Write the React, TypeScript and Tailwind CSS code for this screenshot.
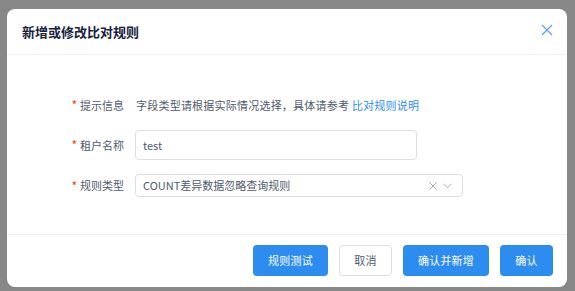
import React from "react";

const font = { fontFamily: '"Noto Sans CJK SC", "Noto Sans", sans-serif' };

function Label({ text }: { text: string }) {
  return (
    <div className="w-[79px] shrink-0 pr-[11px] flex items-center justify-end text-[11px] leading-none text-[#515a6e]">
      <span className="text-[#ed4014] mr-[3px] text-[12px]">*</span>
      <span>{text}</span>
    </div>
  );
}

export default function App() {
  return (
    <div className="w-[575px] h-[291px] bg-[#878787] pt-[9px] pl-[7px]" style={font}>
      <div className="w-[560px] h-[278px] bg-white rounded-[8px] flex flex-col overflow-hidden">
        {/* header */}
        <div className="h-[46px] shrink-0 border-b border-[#eef0f3] flex items-center justify-between pl-[15px] pr-[14px]">
          <div className="text-[13px] leading-none font-bold text-[#17233d]">新增或修改比对规则</div>
          <svg width="12" height="12" viewBox="0 0 12 12" className="-mt-[3px]">
            <path d="M1 1 L11 11 M11 1 L1 11" stroke="#5a9cf8" strokeWidth="1.1" fill="none" />
          </svg>
        </div>
        {/* body */}
        <div className="flex-1 flex flex-col pl-[49px] pt-[35px]">
          <div className="flex h-[30px] items-center">
            <Label text="提示信息" />
            <div className="text-[11px] leading-none tracking-[0.22px] text-[#515a6e] pl-[1px]">
              字段类型请根据实际情况选择，具体请参考 <span className="text-[#2d8cf0]">比对规则说明</span>
            </div>
          </div>
          <div className="flex h-[30px] items-center mt-[10px]">
            <Label text="租户名称" />
            <div className="w-[282px] h-[30px] border border-[#dcdee2] rounded-[4px] flex items-center pl-[7px] text-[11px] leading-none text-[#515a6e]">
              test
            </div>
          </div>
          <div className="flex h-[23px] items-center mt-[14px]">
            <Label text="规则类型" />
            <div className="w-[328px] h-[23px] border border-[#dcdee2] rounded-[4px] flex items-center justify-between pl-[7px] pr-[10px] text-[11px] leading-none text-[#515a6e]">
              <span>COUNT差异数据忽略查询规则</span>
              <div className="flex items-center gap-[6px]">
                <svg width="8" height="8" viewBox="0 0 8 8">
                  <path d="M0.5 0.5 L7.5 7.5 M7.5 0.5 L0.5 7.5" stroke="#a6a9b0" strokeWidth="1" fill="none" />
                </svg>
                <svg width="9" height="6" viewBox="0 0 9 6">
                  <path d="M0.5 0.8 L4.5 4.8 L8.5 0.8" stroke="#a6a9b0" strokeWidth="1" fill="none" />
                </svg>
              </div>
            </div>
          </div>
        </div>
        {/* footer */}
        <div className="h-[53px] shrink-0 border-t border-[#eef0f3] flex items-center justify-end gap-[11px] pr-[14px] pb-[1px]">
          <button className="w-[75px] h-[31px] rounded-[4px] bg-[#2d8cf0] text-white text-[11px] tracking-[0.2px] leading-none">规则测试</button>
          <button className="w-[53px] h-[31px] rounded-[4px] bg-white border border-[#dcdee2] text-[#515a6e] text-[11px] tracking-[0.2px] leading-none">取消</button>
          <button className="w-[86px] h-[31px] rounded-[4px] bg-[#2d8cf0] text-white text-[11px] tracking-[0.2px] leading-none">确认并新增</button>
          <button className="w-[53px] h-[31px] rounded-[4px] bg-[#2d8cf0] text-white text-[11px] tracking-[0.2px] leading-none">确认</button>
        </div>
      </div>
    </div>
  );
}
